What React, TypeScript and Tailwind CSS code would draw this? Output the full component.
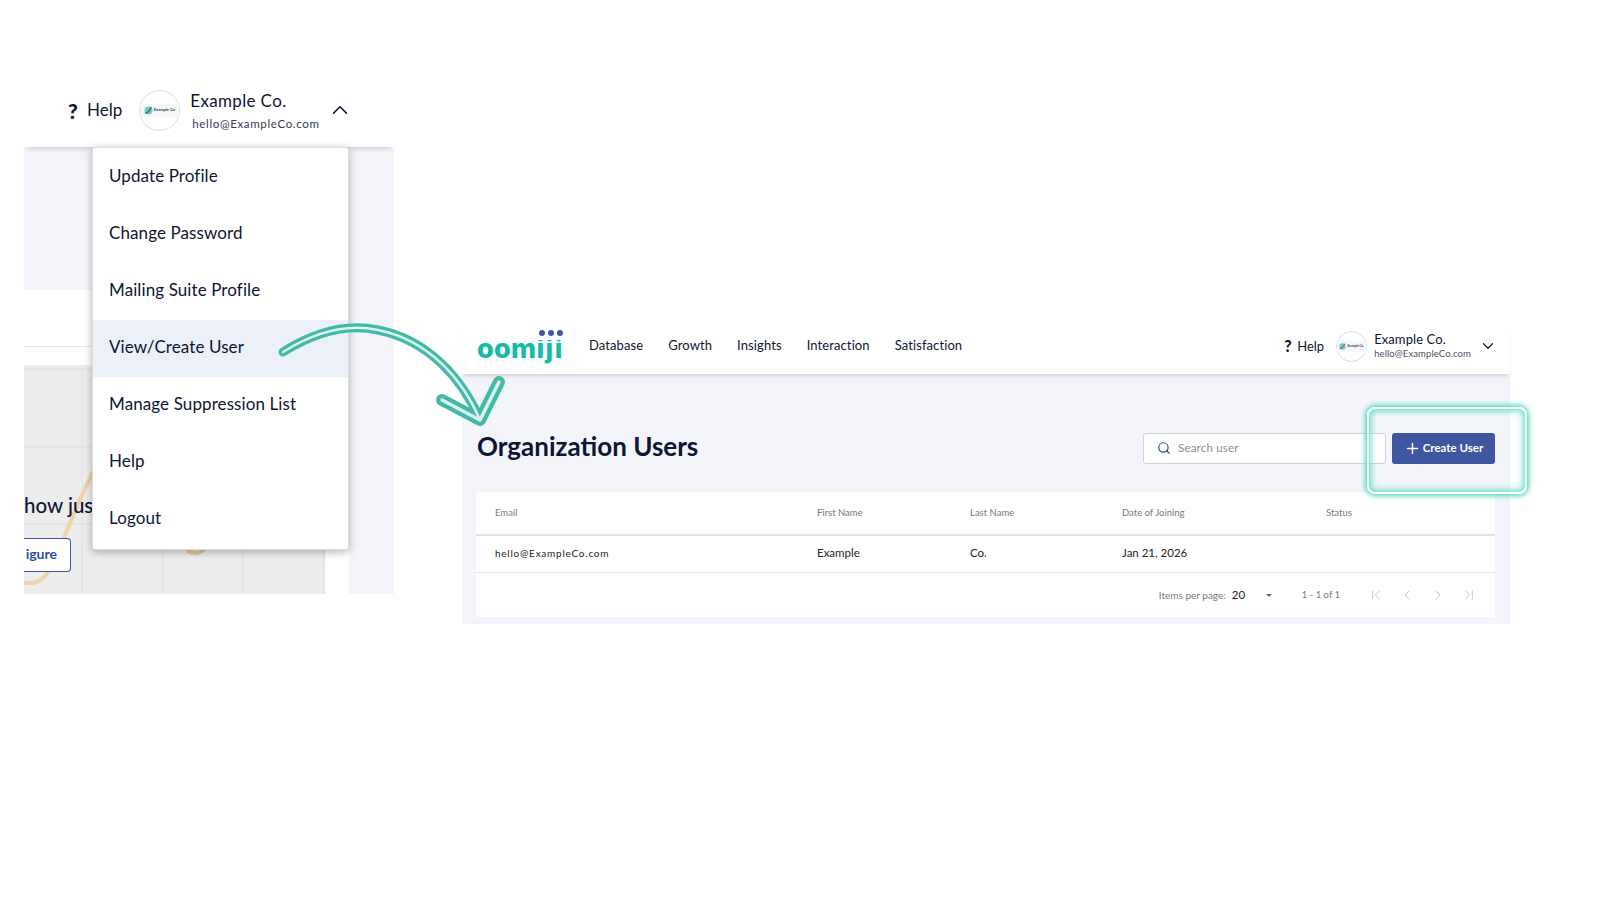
import { ChevronDown, ChevronFirst, ChevronLast, ChevronLeft, ChevronRight, ChevronUp, Plus, Search } from 'lucide-react';

const menuItems = ['Update Profile', 'Change Password', 'Mailing Suite Profile', 'View/Create User', 'Manage Suppression List', 'Help', 'Logout'];
const font = "font-['Lato','Noto_Sans',sans-serif]";

const Avatar = ({ large }: { large?: boolean }) => (
    <div
        className={
            large
                ? 'flex h-[41px] w-[41px] flex-none items-center justify-center rounded-full border border-[#dcdcdc] bg-white'
                : 'flex h-[31px] w-[31px] flex-none items-center justify-center rounded-full border border-[#dcdcdc] bg-white'
        }
    >
        <div className="flex w-full items-center justify-center gap-px bg-[#f6f7f8] py-0.5">
            <svg width={large ? 9 : 7} height={large ? 9 : 7} viewBox="0 0 10 10">
                <circle cx="5" cy="5" r="4.5" fill="#7cc7c4" />
                <path d="M1 8c3 0 5-2 7-7" stroke="#1f6f8b" strokeWidth="1.4" fill="none" />
            </svg>
            <span className={large ? 'text-[4px] leading-none font-bold text-[#33424f]' : 'text-[3px] leading-none font-bold text-[#33424f]'}>Example Co.</span>
        </div>
    </div>
);

const LeftShot = () => (
    <div className="relative ml-[24px] mt-[85px] flex h-[509px] w-[370px] flex-none flex-col">
        <div className="z-10 flex h-[62px] flex-none items-center bg-white pb-[12px] pl-[44px] text-[#0f1535] shadow-[0_5px_5px_-3px_rgba(0,0,0,0.16)]">
            <span className="w-[19px] text-[21px] font-black leading-none">?</span>
            <span className="pb-[2px] text-[17px] leading-none">Help</span>
            <div className="ml-[17px]">
                <Avatar large />
            </div>
            <div className="ml-[10px] flex flex-col">
                <span className="text-[17px] leading-[22px] tracking-[0.35px]">Example Co.</span>
                <span className="mt-[5px] pl-[2px] text-[11.5px] leading-[14px] tracking-[0.65px] text-[#333b4f]">hello@ExampleCo.com</span>
            </div>
            <ChevronUp className="ml-[7px] h-[26px] w-[26px] text-[#0f1535]" strokeWidth={1.5} />
        </div>
        <div className="flex min-h-0 flex-1">
            <div className="flex w-[325px] flex-none flex-col">
                <div className="h-[143px] flex-none bg-[#f3f5fa]" />
                <div className="h-[57px] flex-none border-b border-[#e4e4e4] bg-white" />
                <div className="h-[18px] flex-none bg-white" />
                <div className="relative min-h-0 w-[301px] flex-1 overflow-hidden bg-[#ededed]">
                    <div className="mt-[3px] grid h-[226px] grid-cols-[59px_81px_80px_81px] grid-rows-[78px_77px_71px] border-t-2 border-[#e5e5e5]">
                        {Array.from({ length: 12 }).map((_, index) => (
                            <div key={index} className="border-b-2 border-r-2 border-[#e5e5e5]" />
                        ))}
                    </div>
                    <svg className="absolute inset-0" width="301" height="229" viewBox="0 0 301 229">
                        <path d="M-2 217c14 4 24-2 33-22 9-22 24-62 40-92" stroke="#efd3a8" strokeWidth="4" fill="none" />
                        <path d="M163 186c6 3 12 3 17-1" stroke="#e9c795" strokeWidth="4" fill="none" />
                    </svg>
                    <div className="absolute left-0 top-[128px] whitespace-nowrap text-[20.5px] font-medium leading-6 text-[#0f1535]">how jus</div>
                    <div className="absolute left-0 top-[173px] flex h-[34px] w-[47px] items-center justify-end rounded-r border border-l-0 border-[#3d57a3] bg-white pb-[3px] pr-[13px] text-[14px] font-bold text-[#2f4fa0]">
                        igure
                    </div>
                </div>
            </div>
            <div className="flex-1 bg-[#f4f5fb]" />
        </div>
        <div className="absolute left-[68px] top-[62px] z-20 flex w-[257px] flex-col rounded-[3px] border border-[#dddddd] bg-white py-px shadow-[0_2px_8px_rgba(0,0,0,0.3)]">
            {menuItems.map((item, index) => (
                <div
                    key={item}
                    className={
                        index === 3
                            ? 'flex h-[57px] items-center bg-[#ecf0f8] pb-[3px] pl-[16px] text-[17px] tracking-[0.1px] text-[#0f1535]'
                            : 'flex h-[57px] items-center pb-[3px] pl-[16px] text-[17px] tracking-[0.1px] text-[#0f1535]'
                    }
                >
                    {item}
                </div>
            ))}
        </div>
    </div>
);

const Logo = () => (
    <div className="relative flex h-[40px] w-[86px] flex-none items-center pt-[2px]">
        <span className="font-['Inter',sans-serif] text-[27px] font-extrabold leading-none text-[#14bba6]">
            <span className="tracking-[0.3px]">oom</span>
            <span className="tracking-[1.6px]">iji</span>
        </span>
        <span className="absolute left-[58px] top-0 h-[13px] w-[28px] bg-white" />
        <span className="absolute left-[62px] top-[3px] h-[6px] w-[6px] rounded-full bg-[#3f56a6]" />
        <span className="absolute left-[71px] top-[3px] h-[6px] w-[6px] rounded-full bg-[#3f56a6]" />
        <span className="absolute left-[80px] top-[3px] h-[6px] w-[6px] rounded-full bg-[#3f56a6]" />
    </div>
);

const RightShot = () => (
    <div className="ml-[68px] mt-[320px] flex h-[304px] w-[1048px] flex-none flex-col">
        <div className="z-10 flex h-[54px] flex-none items-center bg-white pl-[15px] text-[#0f1535] shadow-[0_4px_4px_-2px_rgba(0,0,0,0.14)]">
            <Logo />
            <nav className="ml-[26px] flex gap-[25px] pb-[2px] text-[13px] tracking-[0.1px]">
                <span>Database</span>
                <span>Growth</span>
                <span>Insights</span>
                <span>Interaction</span>
                <span>Satisfaction</span>
            </nav>
            <div className="ml-auto flex items-center pb-[2px] pr-[13px]">
                <span className="w-[13px] text-[16px] font-black leading-none">?</span>
                <span className="text-[13px] leading-none">Help</span>
                <div className="ml-[12px]">
                    <Avatar />
                </div>
                <div className="ml-[7px] flex flex-col">
                    <span className="text-[13px] leading-[15px] tracking-[0.1px]">Example Co.</span>
                    <span className="text-[9.5px] leading-[13px] tracking-[0.1px] text-[#4b5263]">hello@ExampleCo.com</span>
                </div>
                <ChevronDown className="ml-[8px] h-[18px] w-[18px]" strokeWidth={1.6} />
            </div>
        </div>
        <div className="flex min-h-0 flex-1 flex-col bg-[#f3f5fa] pb-[7px] pl-[14px] pr-[15px]">
            <div className="flex h-[118px] flex-none items-start">
                <h1 className="mt-[56px] pl-px text-[26px] font-bold leading-[32px] text-[#0f1535]">Organization Users</h1>
                <div className="ml-auto mt-[59px] flex gap-[6px]">
                    <div className="flex h-[31px] w-[243px] items-center rounded-[3px] border border-[#cfd1d6] bg-white pb-px pl-[13px] text-[11.5px] tracking-[0.2px] text-[#8a8d96]">
                        <Search className="h-[14px] w-[14px] text-[#2d4a8a]" strokeWidth={2} />
                        <span className="ml-[7px]">Search user</span>
                    </div>
                    <div className="flex h-[31px] w-[103px] items-center justify-center gap-[2px] rounded-[3px] bg-[#3f56a0] text-[11.5px] font-bold text-white">
                        <Plus className="h-[17px] w-[17px]" strokeWidth={2} />
                        <span className="pb-[2px]">Create User</span>
                    </div>
                </div>
            </div>
            <div className="flex min-h-0 flex-1 flex-col bg-white">
                <div className="grid h-[44px] flex-none grid-cols-[322px_153px_152px_204px_1fr] items-center border-b-2 border-[#e3e3e3] pl-[19px] text-[9.5px] text-[#77797f]">
                    <span>Email</span>
                    <span>First Name</span>
                    <span>Last Name</span>
                    <span>Date of Joining</span>
                    <span>Status</span>
                </div>
                <div className="grid h-[37px] flex-none grid-cols-[322px_153px_152px_204px_1fr] items-center border-b border-[#e6e6e6] pb-[2px] pl-[19px] text-[11.5px] text-[#20242c]">
                    <span className="text-[10px] tracking-[0.75px]">hello@ExampleCo.com</span>
                    <span>Example</span>
                    <span>Co.</span>
                    <span>Jan 21, 2026</span>
                    <span />
                </div>
                <div className="flex flex-1 items-center justify-end pr-[18px] text-[#77797f]">
                    <span className="text-[10px]">Items per page:</span>
                    <span className="ml-[6px] w-[24px] text-[11.5px] text-[#20242c]">20</span>
                    <span className="ml-[10px] h-0 w-0 border-x-[3.5px] border-t-[3.5px] border-x-transparent border-t-[#666a70]" />
                    <span className="ml-[30px] text-[9.5px]">1 - 1 of 1</span>
                    <div className="ml-[28px] flex gap-[15px] text-[#c4c6ca]">
                        <ChevronFirst className="h-[16px] w-[16px]" strokeWidth={1.5} />
                        <ChevronLeft className="h-[16px] w-[16px]" strokeWidth={1.5} />
                        <ChevronRight className="h-[16px] w-[16px]" strokeWidth={1.5} />
                        <ChevronLast className="h-[16px] w-[16px]" strokeWidth={1.5} />
                    </div>
                </div>
            </div>
        </div>
    </div>
);

const CurvedArrow = () => (
    <svg className="pointer-events-none absolute left-[270px] top-[310px] z-30" width="250" height="130" viewBox="270 310 250 130" fill="none">
        <g stroke="#43b9a7" strokeLinecap="round" strokeLinejoin="round">
            <path d="M283 352C318 330 350 324 378 330C428 340 462 378 480 420" strokeWidth="9" />
            <path d="M442 400L480 420L499 382" strokeWidth="12" />
        </g>
        <g stroke="#d9f3ee" strokeLinecap="round" strokeLinejoin="round">
            <path d="M283 352C318 330 350 324 378 330C428 340 462 378 480 420" strokeWidth="2.5" />
            <path d="M442 400L480 420L499 382" strokeWidth="3.5" />
        </g>
    </svg>
);

export default function App() {
    return (
        <div className={`relative flex h-[900px] w-full items-start overflow-hidden bg-white ${font}`}>
            <LeftShot />
            <RightShot />
            <CurvedArrow />
            <div className="pointer-events-none absolute left-[1367px] top-[407px] z-30 h-[87px] w-[160px] rounded-[8px] border-2 border-white shadow-[0_0_5px_2px_rgba(64,214,190,0.95),inset_0_0_6px_2px_rgba(64,214,190,0.8)]" />
        </div>
    );
}
